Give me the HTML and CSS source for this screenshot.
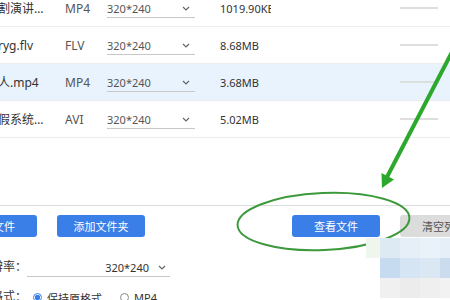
FILE: index.html
```html
<!DOCTYPE html>
<html lang="zh-CN">
<head>
    <meta charset="UTF-8">
    <title>格式转换 - 文件列表</title>
    <link rel="stylesheet" href="styles.css">
</head>
<body>
    <div class="page">
        <div class="file-list">
            <div class="file-row">
                <div class="name">技术部切割演讲视频.mp4</div>
                <div class="format">MP4</div>
                <div class="size-select"><span>320*240</span><svg class="chev" width="8" height="5" viewBox="0 0 8 5"><path d="M1 1 L4 4 L7 1"/></svg></div>
                <div class="filesize">1019.90KB</div>
                <div class="progress"></div>
            </div>
            <div class="file-row">
                <div class="name">视频教程ryg.flv</div>
                <div class="format">FLV</div>
                <div class="size-select"><span>320*240</span><svg class="chev" width="8" height="5" viewBox="0 0 8 5"><path d="M1 1 L4 4 L7 1"/></svg></div>
                <div class="filesize">8.68MB</div>
                <div class="progress"></div>
            </div>
            <div class="file-row selected">
                <div class="name">美食小达人.mp4</div>
                <div class="format">MP4</div>
                <div class="size-select"><span>320*240</span><svg class="chev" width="8" height="5" viewBox="0 0 8 5"><path d="M1 1 L4 4 L7 1"/></svg></div>
                <div class="filesize">3.68MB</div>
                <div class="progress"></div>
            </div>
            <div class="file-row">
                <div class="name">中小学暑假系统复习.avi</div>
                <div class="format">AVI</div>
                <div class="size-select"><span>320*240</span><svg class="chev" width="8" height="5" viewBox="0 0 8 5"><path d="M1 1 L4 4 L7 1"/></svg></div>
                <div class="filesize">5.02MB</div>
                <div class="progress"></div>
            </div>
        </div>

        <div class="toolbar">
            <button class="btn">添加文件</button>
            <button class="btn">添加文件夹</button>
            <button class="btn push-right">查看文件</button>
            <button class="btn btn-gray">清空列表</button>
        </div>

        <div class="setting-row">
            <div class="label">分辨率：</div>
            <div class="res-select"><span>320*240</span><svg class="chev" width="8" height="5" viewBox="0 0 8 5"><path d="M1 1 L4 4 L7 1"/></svg></div>
        </div>
        <div class="setting-row">
            <div class="label">输出格式：</div>
            <label class="radio"><span class="dot checked"></span>保持原格式</label>
            <label class="radio"><span class="dot"></span>MP4</label>
        </div>
    </div>

    <!-- hand-drawn annotation on top of the screenshot -->
    <svg class="annotation" width="450" height="300" viewBox="0 0 450 300">
        <ellipse cx="323.5" cy="221.5" rx="86" ry="28.5" transform="rotate(-2.5 323.5 221.5)" fill="none" stroke="#3c9a3c" stroke-width="2"/>
        <line x1="452" y1="52" x2="387" y2="177" stroke="#2ca82c" stroke-width="4"/>
        <polygon points="382,188 381.5,173 394,179.5" fill="#2ca82c"/>
    </svg>

    <div class="mosaic">
        <i style="background:#eef6ee"></i><i style="background:#dde9f3"></i><i style="background:#e6eff8"></i><i style="background:#e9f1f9"></i><i style="background:#e6eff8"></i>
        <i style="background:#fff"></i><i style="background:#c6dbef"></i><i style="background:#d6e5f3"></i><i style="background:#dbe8f4"></i><i style="background:#cadcee"></i>
        <i style="background:#fff"></i><i style="background:#f0f0f0"></i><i style="background:#ececec"></i><i style="background:#efefef"></i><i style="background:#f2f2f2"></i>
    </div>
</body>
</html>
```

FILE: styles.css
```css
body {
    margin: 0;
    width: 450px;
    height: 300px;
    overflow: hidden;
    position: relative;
    background-color: #fff;
    font-family: "Noto Sans", "Noto Sans CJK SC", sans-serif;
    color: #333;
}

.page {
    margin-left: -51px;
    width: 539px;
}

.file-list {
    margin-top: -10px;
    height: 215px;
}

.file-row {
    display: grid;
    grid-template-columns: 115px 42px 113px 180px 38px;
    align-items: center;
    height: 37px;
    box-sizing: border-box;
    padding-left: 1px;
    border-bottom: 1px solid #ececec;
}

.file-row.selected {
    background-color: #e8f3fd;
}

.name {
    width: 101px;
    font-size: 12px;
    white-space: nowrap;
    overflow: hidden;
    text-overflow: ellipsis;
}

.format {
    font-size: 12px;
    color: #555;
}

.size-select {
    width: 88px;
    height: 15px;
    display: flex;
    align-items: center;
    justify-content: space-between;
    border-bottom: 1px solid #c8c8c8;
    font-size: 11px;
    color: #555;
    padding-right: 5px;
    box-sizing: border-box;
    margin-top: 4px;
    line-height: 11px;
    padding-bottom: 3px;
}

.chev path {
    fill: none;
    stroke: #666;
    stroke-width: 1.2;
}

.filesize {
    width: 51px;
    font-size: 11px;
    white-space: nowrap;
    overflow: hidden;
}

.progress {
    height: 2px;
    background-color: #dedede;
}

.toolbar {
    display: flex;
    gap: 20px;
    border-top: 1px solid #dcdcdc;
    padding-top: 9px;
}

.btn {
    width: 88px;
    height: 22px;
    border: none;
    border-radius: 3px;
    background-color: #3a7ee8;
    color: #fff;
    font-family: inherit;
    font-size: 11px;
    padding: 0;
}

.btn-gray {
    background-color: #dcdcdc;
    color: #555;
}

.push-right {
    margin-left: auto;
}

.setting-row {
    display: flex;
    align-items: center;
    height: 30px;
    font-size: 12px;
}

.toolbar + .setting-row {
    margin-top: 14px;
}

.label {
    width: 78px;
    text-align: right;
}

.res-select {
    width: 143px;
    height: 16px;
    display: flex;
    align-items: center;
    justify-content: flex-end;
    gap: 9px;
    padding-right: 4px;
    box-sizing: border-box;
    border-bottom: 1px solid #c8c8c8;
    font-size: 11px;
    margin-top: 6px;
    padding-bottom: 3px;
}

.radio {
    display: flex;
    align-items: center;
    gap: 5px;
    font-size: 11px;
    margin-left: 6px;
    margin-right: 12px;
    margin-top: 3px;
}

.dot {
    width: 7px;
    height: 7px;
    border: 1px solid #888;
    border-radius: 50%;
    box-sizing: content-box;
}

.dot.checked {
    border-color: #3a7ee8;
    background: radial-gradient(circle, #3a7ee8 0 2.5px, #fff 3px);
}

.annotation {
    position: absolute;
    left: 0;
    top: 0;
    pointer-events: none;
}

.mosaic {
    position: absolute;
    left: 366px;
    top: 238px;
    display: grid;
    grid-template-columns: 14px 20px 20px 20px 20px;
    grid-auto-rows: 20px;
}

.mosaic i {
    display: block;
}
```
